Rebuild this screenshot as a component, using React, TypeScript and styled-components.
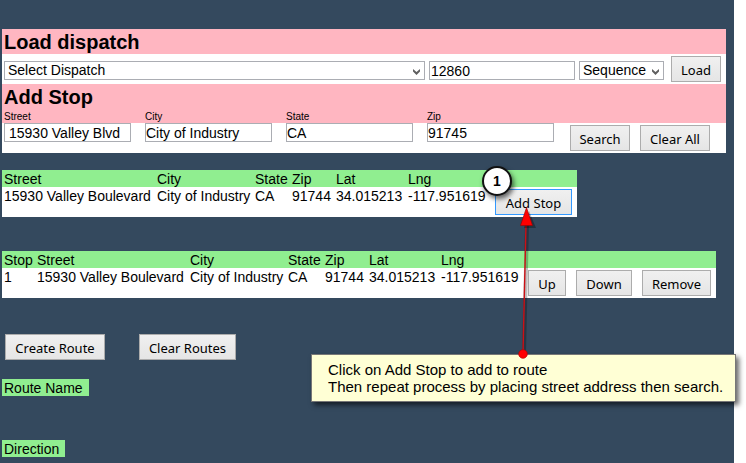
import React from "react";
import styled, { createGlobalStyle } from "styled-components";

const GlobalStyle = createGlobalStyle`
  *, *::before, *::after { box-sizing: border-box; }
  body {
    margin: 0;
    background: #fff;
    color: #000;
    font: 14px/17px "Liberation Sans", Arial, sans-serif;
  }
`;

const Page = styled.main`
  position: relative;
  min-height: 100vh;
  margin-right: 12px;
  padding: 29px 8px 6px 2px;
  background: #34495e;
`;

const Panel = styled.section`
  background: #fff;
`;

const PanelHead = styled.header`
  padding-left: 2px;
  background: #ffb6c1;
`;

const Title = styled.h2`
  height: 25px;
  margin: 0;
  font-size: 20px;
  line-height: 27px;
`;

const LoadRow = styled.div`
  display: flex;
  align-items: flex-end;
  gap: 4px;
  padding: 2px 5px 2px 2px;
`;

const Field = styled.input`
  width: 100%;
  height: 19px;
  padding: 1px 0 0;
  border: 1px solid #abadb3;
  background: #fff;
  color: #000;
  font: inherit;
`;

const StreetField = styled(Field)`
  padding-left: 4px;
`;

const CodeField = styled(Field)`
  flex: none;
  width: 146px;
  margin-bottom: 2px;
  padding-left: 1px;
`;

const SelectBox = styled.div<{ $grow?: boolean }>`
  position: relative;
  flex: ${(p) => (p.$grow ? "1" : "none")};
  width: ${(p) => (p.$grow ? "auto" : "85px")};
  margin: 0 ${(p) => (p.$grow ? "0" : "3px")} 2px 0;
`;

const Select = styled.select`
  display: block;
  appearance: none;
  width: 100%;
  height: 19px;
  padding: 0 14px 0 3px;
  border: 1px solid #abadb3;
  border-radius: 0;
  background: #fff;
  color: #000;
  font: inherit;
`;

const Chevron = styled.svg`
  position: absolute;
  right: 5px;
  top: 8px;
  width: 7px;
  height: 6px;
  pointer-events: none;
`;

const Button = styled.button<{ $width: number; $focused?: boolean }>`
  width: ${(p) => p.$width}px;
  height: 26px;
  padding: 2px 0 0;
  border: 1px solid ${(p) => (p.$focused ? "#3399ff" : "#acacac")};
  background: linear-gradient(#f0f0f0, #e5e5e5);
  color: #000;
  font: 13px/20px "Noto Sans", "Segoe UI", sans-serif;
  white-space: nowrap;
`;

const StopGrid = styled.div`
  display: grid;
  grid-template-columns: repeat(4, 1fr) 142px;
  column-gap: 14px;
  padding: 0 16px 0 2px;
`;

const LabelGrid = styled(StopGrid)`
  padding-left: 0;
`;

const FieldLabel = styled.label`
  height: 14px;
  font-size: 10px;
  line-height: 16px;
`;

const FieldGrid = styled(StopGrid)`
  height: 30px;
`;

const SearchActions = styled.div`
  display: flex;
  gap: 10px;
  padding: 2px 0 2px 2px;
`;

const Table = styled.table<{ $gap: number }>`
  table-layout: fixed;
  width: 0;
  margin-top: ${(p) => p.$gap}px;
  border-collapse: collapse;
  background: #fff;
  white-space: nowrap;

  th {
    height: 17px;
    padding: 1px 2px 0;
    background: #90ee90;
    font-weight: normal;
    line-height: 16px;
    text-align: left;
  }

  td {
    height: 30px;
    padding: 1px 2px 0;
    vertical-align: top;
  }
`;

const Column = styled.col<{ $width: number }>`
  width: ${(p) => p.$width}px;
`;

const RowActions = styled.div`
  position: relative;
  display: flex;
  gap: 10px;
  padding: 1px 3px;
`;

const RouteActions = styled.div`
  display: flex;
  gap: 34px;
  margin-top: 36px;
  padding-left: 3px;
`;

const RouteLabel = styled.div<{ $gap: number }>`
  width: max-content;
  margin-top: ${(p) => p.$gap}px;
  padding: 1px 6px 0 2px;
  background: #90ee90;
  line-height: 16px;
`;

const Callout = styled.aside`
  position: absolute;
  left: -181px;
  top: 166px;
  width: 425px;
  padding: 6px 16px;
  border: 1px solid #777;
  background: #ffffd5;
  box-shadow: 3px 3px 5px rgba(0, 0, 0, 0.6);
  font-size: 15px;
  white-space: nowrap;
  z-index: 1;
`;

const Pointer = styled.svg`
  position: absolute;
  left: 16px;
  top: 19px;
  width: 40px;
  height: 157px;
  pointer-events: none;
  z-index: 2;
`;

const Badge = styled.span`
  position: absolute;
  left: -10px;
  top: -22px;
  width: 30px;
  height: 30px;
  border: 2px solid #111;
  border-radius: 50%;
  background: #fff;
  box-shadow: 2px 3px 5px rgba(0, 0, 0, 0.6);
  font-weight: bold;
  line-height: 27px;
  text-align: center;
  z-index: 3;
`;

const stopFields = [
  { id: "street", label: "Street", value: "15930 Valley Blvd" },
  { id: "city", label: "City", value: "City of Industry" },
  { id: "state", label: "State", value: "CA" },
  { id: "zip", label: "Zip", value: "91745" },
];

const addressHeads = ["Street", "City", "State", "Zip", "Lat", "Lng"];
const addressWidths = [153, 98, 37, 44, 72, 84];
const address = [
  "15930 Valley Boulevard",
  "City of Industry",
  "CA",
  "91744",
  "34.015213",
  "-117.951619",
];

function AddressTable(props: {
  gap: number;
  stop?: string;
  actionWidth: number;
  children: React.ReactNode;
}) {
  const heads = props.stop ? ["Stop", ...addressHeads] : addressHeads;
  const cells = props.stop ? [props.stop, ...address] : address;
  const widths = props.stop ? [33, ...addressWidths] : addressWidths;
  return (
    <Table $gap={props.gap}>
      <colgroup>
        {widths.map((w, i) => (
          <Column key={i} $width={w} />
        ))}
        <Column $width={props.actionWidth} />
      </colgroup>
      <thead>
        <tr>
          {heads.map((h) => (
            <th key={h} scope="col">
              {h}
            </th>
          ))}
          <th aria-label="Actions" />
        </tr>
      </thead>
      <tbody>
        <tr>
          {cells.map((c, i) => (
            <td key={i}>{c}</td>
          ))}
          <td>{props.children}</td>
        </tr>
      </tbody>
    </Table>
  );
}

function Dropdown({ label, option, grow }: { label: string; option: string; grow?: boolean }) {
  return (
    <SelectBox $grow={grow}>
      <Select aria-label={label}>
        <option>{option}</option>
      </Select>
      <Chevron viewBox="0 0 7 6" aria-hidden="true">
        <path d="M0 0L3.5 3L7 0V2.5L3.5 6L0 2.5Z" fill="#606060" />
      </Chevron>
    </SelectBox>
  );
}

export default function App() {
  return (
    <Page>
      <GlobalStyle />
      <Panel>
        <PanelHead>
          <Title>Load dispatch</Title>
        </PanelHead>
        <LoadRow>
          <Dropdown label="Dispatch" option="Select Dispatch" grow />
          <CodeField aria-label="Dispatch number" defaultValue="12860" />
          <Dropdown label="Order" option="Sequence" />
          <Button $width={50}>Load</Button>
        </LoadRow>
        <PanelHead>
          <Title>Add Stop</Title>
          <LabelGrid>
            {stopFields.map((f) => (
              <FieldLabel key={f.id} htmlFor={f.id}>
                {f.label}
              </FieldLabel>
            ))}
          </LabelGrid>
        </PanelHead>
        <FieldGrid>
          {stopFields.map((f) =>
            f.id === "street" ? (
              <StreetField key={f.id} id={f.id} defaultValue={f.value} />
            ) : (
              <Field key={f.id} id={f.id} defaultValue={f.value} />
            )
          )}
          <SearchActions>
            <Button $width={60}>Search</Button>
            <Button $width={70}>Clear All</Button>
          </SearchActions>
        </FieldGrid>
      </Panel>

      <AddressTable gap={17} actionWidth={87}>
        <RowActions>
          <Button $width={77} $focused>
            Add Stop
          </Button>
          <Badge>1</Badge>
          <Pointer viewBox="0 0 40 157" aria-hidden="true">
            <path d="M19 18L16 146" stroke="#000" strokeOpacity="0.25" strokeWidth="4" />
            <path d="M18 17L15 146" stroke="#cc1016" strokeWidth="1.4" />
            <path d="M21 4L28 21H16Z" fill="#000" fillOpacity="0.3" />
            <path d="M18.5 0.5L24.5 18.5H12.5Z" fill="#f00" stroke="#900" strokeWidth="0.6" />
            <circle cx="15" cy="147" r="4.3" fill="#f00" stroke="#b00" strokeWidth="0.7" />
          </Pointer>
          <Callout>
            Click on Add Stop to add to route
            <br />
            Then repeat process by placing street address then search.
          </Callout>
        </RowActions>
      </AddressTable>

      <AddressTable gap={34} stop="1" actionWidth={193}>
        <RowActions>
          <Button $width={38}>Up</Button>
          <Button $width={56}>Down</Button>
          <Button $width={69}>Remove</Button>
        </RowActions>
      </AddressTable>

      <RouteActions>
        <Button $width={100}>Create Route</Button>
        <Button $width={97}>Clear Routes</Button>
      </RouteActions>
      <RouteLabel $gap={19}>Route Name</RouteLabel>
      <RouteLabel $gap={44}>Direction</RouteLabel>
    </Page>
  );
}
